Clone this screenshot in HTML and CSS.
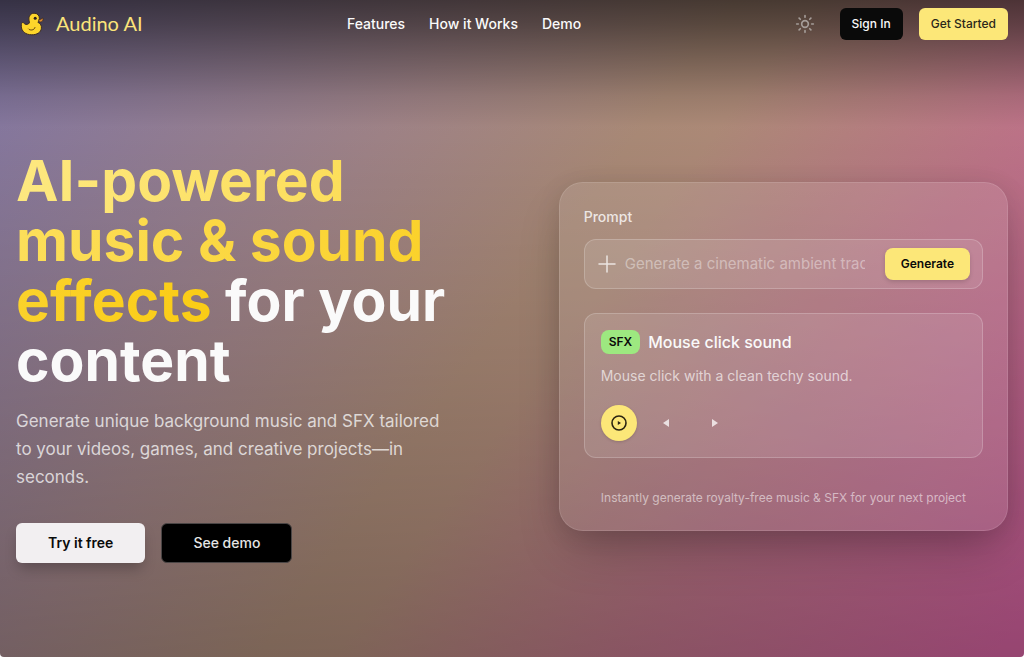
FILE: index.html
```html
<!DOCTYPE html>
<html lang="en">
<head>
<meta charset="utf-8">
<meta name="viewport" content="width=device-width, initial-scale=1">
<title>Audino AI</title>
<link rel="stylesheet" href="styles.css">
</head>
<body>
<div class="page">
  <header class="header">
    <a class="brand" href="#">
      <svg class="brand-icon" viewBox="0 0 24 24" aria-hidden="true">
        <path d="M9.400 9.600C8 6.300 9.400 1.300 14 1.200c3.600 0 5.400 2.400 5.400 5.200 0 1.700-.8 2.900-1.500 3.900 2.700 1.300 3.800 3.500 3.500 6-.5 4.200-4.500 6.500-9.600 6.500C5.600 22.800 1.400 19.300 1.300 14.200c0-2.300.3-3.700 1.400-3.700 1.200 0 1.500 1.600 3.200 1.900 1.700.2 4-.6 3.500-2.800z" fill="#fdd52b" stroke="#3b2c25" stroke-width="1"/>
        <path d="M18.900 7.400c1.400.2 2.900-.6 3.900-1.500.8 1.400.2 3.200-1.400 3.900-.8.400-1.800.2-2.600-.3z" fill="#df8a2d" stroke="#3b2c25" stroke-width=".8"/>
        <path d="M8.600 17c1.200 1.800 5.800 1.500 6.400-1.500" fill="none" stroke="#6b4a14" stroke-width="1" stroke-linecap="round"/>
        <circle cx="15.200" cy="6.200" r="1.500" fill="#2d211c"/>
      </svg>
      <span>Audino AI</span>
    </a>
    <nav class="nav" aria-label="Main">
      <a href="#features">Features</a>
      <a href="#how">How it Works</a>
      <a href="#demo">Demo</a>
    </nav>
    <div class="actions">
      <button class="theme" type="button" aria-label="Toggle theme">
        <svg viewBox="0 0 24 24" width="20" height="20" fill="none" stroke="currentColor" stroke-width="2" stroke-linecap="round" aria-hidden="true"><circle cx="12" cy="12" r="4"/><path d="M12 2v2M12 20v2M4.930 4.930l1.410 1.410M17.660 17.660l1.410 1.410M2 12h2M20 12h2M6.340 17.660l-1.410 1.410M19.070 4.930l-1.410 1.410"/></svg>
      </button>
      <a class="btn btn-dark" href="#signin">Sign In</a>
      <a class="btn btn-yellow" href="#start">Get Started</a>
    </div>
  </header>

  <main class="hero">
    <section class="intro">
      <h1><span class="accent">AI-powered music &amp; sound effects</span> for your content</h1>
      <p>Generate unique background music and SFX tailored to your videos, games, and creative projects—in seconds.</p>
      <div class="cta">
        <a class="cta-light" href="#start">Try it free</a>
        <a class="cta-dark" href="#demo">See demo</a>
      </div>
    </section>

    <section class="card" id="demo">
      <label class="label" for="prompt">Prompt</label>
      <div class="prompt">
        <svg viewBox="0 0 20 20" width="20" height="20" stroke="currentColor" stroke-width="1.500" stroke-linecap="round" aria-hidden="true"><path d="M10 2v16M2 10h16"/></svg>
        <input id="prompt" type="text" placeholder="Generate a cinematic ambient track">
        <button class="generate" type="button">Generate</button>
      </div>
      <article class="result">
        <div class="result-head"><span class="badge">SFX</span><h2>Mouse click sound</h2></div>
        <p>Mouse click with a clean techy sound.</p>
        <div class="player">
          <button class="play" type="button" aria-label="Play"><svg viewBox="0 0 18 18" width="18" height="18" aria-hidden="true"><circle cx="9" cy="9" r="7" fill="none" stroke="currentColor" stroke-width="1.600"/><path d="M7.800 7.100v3.800L11 9z" fill="currentColor"/></svg></button>
          <div class="skip">
            <button type="button" aria-label="Previous"><svg viewBox="0 0 6 8" width="6" height="8" aria-hidden="true"><path d="M6 0v8L0 4z" fill="currentColor"/></svg></button>
            <button type="button" aria-label="Next"><svg viewBox="0 0 6 8" width="6" height="8" aria-hidden="true"><path d="M0 0v8l6-4z" fill="currentColor"/></svg></button>
          </div>
        </div>
      </article>
      <p class="note">Instantly generate royalty-free music &amp; SFX for your next project</p>
    </section>
  </main>
</div>
</body>
</html>
```
FILE: styles.css
```css
* { box-sizing: border-box; }
html { background: #fff; }
body {
  margin: 0;
  font-family: Inter, "Liberation Sans", sans-serif;
  color: #fafafa;
}
h1, h2, p { margin: 0; }
a { color: inherit; text-decoration: none; }
button, input { font: inherit; color: inherit; border: 0; padding: 0; background: none; }
button { cursor: pointer; }
svg { display: block; flex: none; }

.page {
  min-height: 100vh;
  display: flex;
  flex-direction: column;
  border-radius: 0 0 4px 4px;
  background:
    linear-gradient(180deg, rgba(0, 0, 0, .58), rgba(0, 0, 0, .48) 24px, rgba(0, 0, 0, .1) 96px, rgba(0, 0, 0, 0) 128px),
    linear-gradient(180deg, rgba(0, 0, 0, 0) 120px, rgba(0, 0, 0, .27)),
    linear-gradient(126deg, #8076a4 0%, #85779d 6%, #9e8286 32%, #a98976 49%, #ac8977 54%, #bb7486 73%, #cd5f9a 98%);
}

.header {
  display: flex;
  align-items: center;
  justify-content: space-between;
  padding: 8px 16px;
}
.brand {
  display: flex;
  align-items: center;
  gap: 12px;
  padding-left: 4px;
  font-family: Lato, "Noto Sans", sans-serif;
  font-size: 20px;
  line-height: 24px;
  color: #fbe47a;
}
.brand span { padding-bottom: 2px; }
.brand-icon { width: 24px; height: 24px; }
.nav { display: flex; gap: 24px; font-size: 14px; font-weight: 500; line-height: 20px; }
.actions { display: flex; align-items: center; gap: 16px; }
.theme { display: grid; place-items: center; width: 38px; height: 32px; color: #a59d99; }
.btn {
  padding: 8px 12px;
  border-radius: 6px;
  font-size: 12px;
  font-weight: 500;
  line-height: 16px;
}
.btn-dark { background: #0a0a0a; }
.btn-yellow { background: #fce778; color: #2b271a; }

.hero {
  flex: 1;
  display: grid;
  grid-template-columns: 1fr 1fr;
  gap: 96px;
  align-items: center;
  padding: 8px 16px 0;
}
h1 { font-size: 57px; line-height: 60px; font-weight: 700; }
.accent {
  background: linear-gradient(90deg, #fde880, #facc15);
  -webkit-background-clip: text;
  background-clip: text;
  color: transparent;
}
.intro p { max-width: 440px; margin-top: 16px; font-size: 17px; line-height: 28px; color: rgba(250, 250, 250, .75); }
.cta { display: flex; align-items: center; gap: 16px; margin-top: 32px; font-size: 14px; line-height: 20px; }
.cta a { padding: 10px 32px; border-radius: 6px; }
.cta .cta-light { background: #f2eff1; color: #0a0a0a; font-weight: 600; box-shadow: 0 8px 14px -3px rgba(0, 0, 0, .25); }
.cta .cta-dark { padding: 9px 31px; background: #000; border: 1px solid #4a4545; font-weight: 500; color: #e5e5e5; }

.card {
  padding: 24px;
  border: 1px solid rgba(255, 255, 255, .2);
  border-radius: 24px;
  background: rgba(255, 255, 255, .1);
  background-clip: padding-box;
  box-shadow: 0 25px 50px -12px rgba(0, 0, 0, .25), 0 4px 24px rgba(0, 0, 0, .1);
}
.label { display: block; font-size: 14px; font-weight: 500; line-height: 20px; color: rgba(255, 255, 255, .8); }
.prompt {
  display: flex;
  align-items: center;
  gap: 8px;
  margin-top: 12px;
  padding: 8px 12px;
  border: 1px solid rgba(255, 255, 255, .2);
  border-radius: 12px;
  background: rgba(255, 255, 255, .1);
  color: rgba(255, 255, 255, .75);
}
.prompt input { flex: 1; min-width: 0; padding-right: 12px; font-size: 15px; line-height: 24px; outline: 0; }
.prompt input::placeholder { color: rgba(255, 255, 255, .4); opacity: 1; }
.generate {
  padding: 8px 16px;
  border-radius: 8px;
  background: #fce778;
  color: #0a0a0a;
  font-size: 12px;
  font-weight: 600;
  line-height: 16px;
  box-shadow: 0 2px 4px rgba(0, 0, 0, .15);
}
.result {
  margin-top: 24px;
  padding: 16px;
  border: 1px solid rgba(255, 255, 255, .2);
  border-radius: 12px;
  background: rgba(255, 255, 255, .1);
}
.result-head { display: flex; align-items: center; gap: 8px; }
.badge { padding: 4px 8px; border-radius: 8px; background: #9de880; color: #0a0a0a; font-size: 12px; font-weight: 600; line-height: 16px; }
h2 { font-size: 16px; font-weight: 500; line-height: 24px; }
.result p { margin-top: 12px; font-size: 14px; line-height: 20px; color: rgba(255, 255, 255, .65); }
.player { display: flex; align-items: center; gap: 16px; margin-top: 19px; }
.play { display: grid; place-items: center; width: 36px; height: 36px; border-radius: 50%; background: #fce778; color: #2a2412; box-shadow: 0 1px 3px rgba(0, 0, 0, .15); }
.skip { display: flex; gap: 23px; color: rgba(255, 255, 255, .75); }
.skip button { display: grid; place-items: center; width: 26px; height: 26px; }
.note { margin-top: 32px; font-size: 12px; line-height: 16px; text-align: center; color: rgba(255, 255, 255, .55); }

@media (max-width: 760px) {
  .nav { display: none; }
  .hero { grid-template-columns: 1fr; gap: 40px; padding: 40px 16px; }
}
```
